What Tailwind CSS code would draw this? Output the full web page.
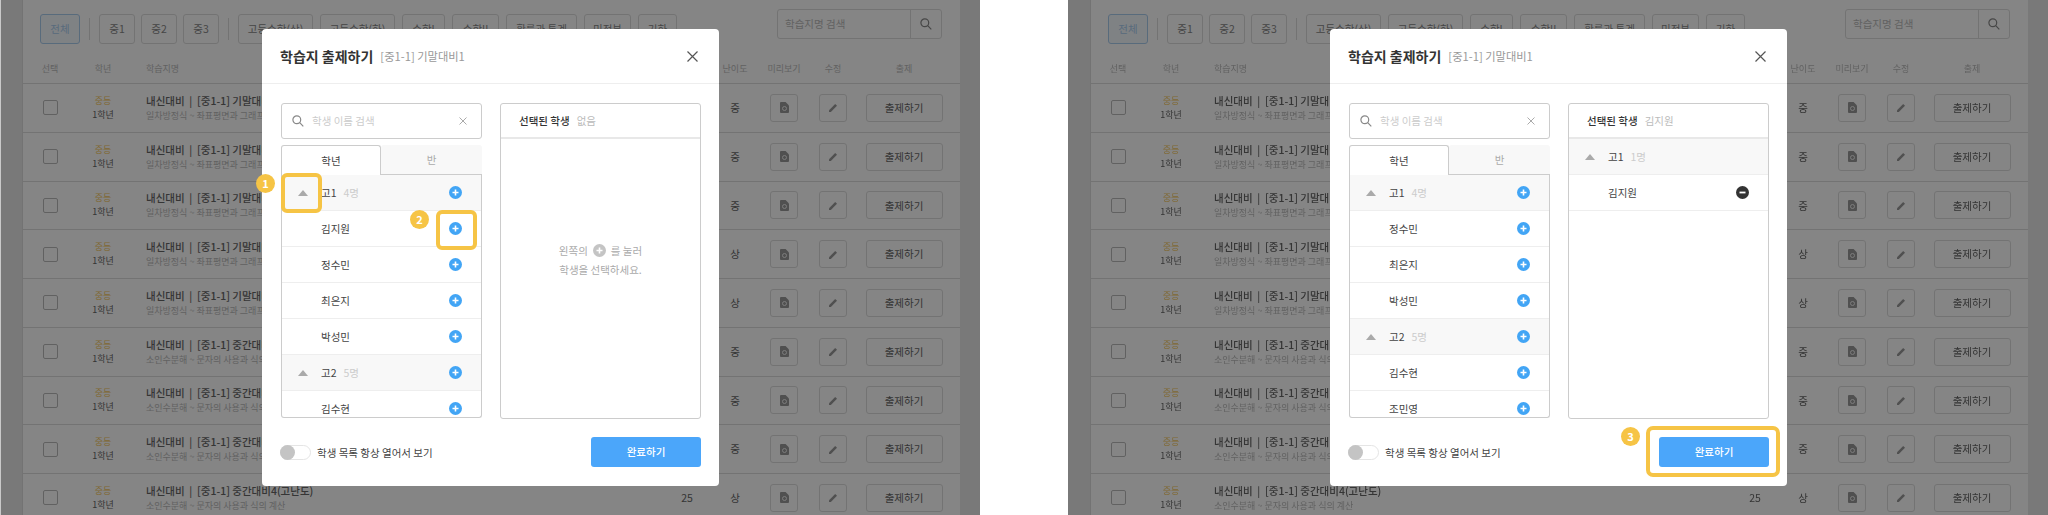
<!DOCTYPE html>
<html>
<head>
    <meta charset="UTF-8">
    <title>학습지 출제하기</title>
    <script src="https://cdn.jsdelivr.net/npm/@tailwindcss/browser@4"></script>
</head>
<body class="relative w-[2048px] h-[515px] overflow-hidden bg-white font-['Noto_Sans_CJK_KR','Noto_Sans',sans-serif] text-[10.5px] text-[#444]">
    <div class="flex gap-[88px] h-full blur-[0.4px]">
        <section class="relative w-[980px] h-full overflow-hidden">
            <div data-table class="h-full"></div>
            <div class="absolute inset-0 bg-black/48"></div>
            <div class="absolute left-[262px] top-[29px] w-[457px] h-[457px] rounded-[4px] bg-white">
                <div data-head></div>
                <div class="flex gap-[18px] pl-[19px] pr-[18px] pt-[19px]">
                    <div class="w-[201px]">
                        <div data-search></div>
                        <div data-tabs></div>
                        <div data-list="고1 4명|김지원|정수민|최은지|박성민|고2 5명|김수현" class="h-[243px] overflow-hidden rounded-b-[3px] border border-t-0 border-[#ccc]"></div>
                    </div>
                    <div class="w-[201px] h-[316px] rounded-[3px] border border-[#ccc]">
                        <div class="flex items-center h-[35px] pl-[18px] border-b-2 border-[#e8e8e8]">
                            <b class="font-medium text-[#333]">선택된 학생</b>
                            <span class="ml-[7px] text-[#bbb]">없음</span>
                        </div>
                        <div class="flex flex-col items-center pt-[102px] text-[#aaa] leading-[19px]">
                            <p class="flex items-center gap-[5px]">왼쪽의
                                <svg width="13" height="13" viewBox="0 0 13 13"><circle cx="6.5" cy="6.5" r="6.5" fill="#c4c4c4"/><path d="M6.5 3.5v6M3.5 6.5h6" stroke="#fff" stroke-width="1.6"/></svg>
                                를 눌러</p>
                            <p>학생을 선택하세요.</p>
                        </div>
                    </div>
                </div>
                <div data-foot></div>
                <div class="absolute left-[19px] top-[144px] w-[41px] h-[40px] rounded-[6px] border-4 border-[#f6c445]"></div>
                <div class="absolute left-[174px] top-[181px] w-[41px] h-[40px] rounded-[6px] border-4 border-[#f6c445]"></div>
                <div class="absolute left-[-6px] top-[145px] flex items-center justify-center w-[19px] h-[19px] rounded-full bg-[#f6c445] text-[11px] font-bold text-white">1</div>
                <div class="absolute left-[148px] top-[181px] flex items-center justify-center w-[19px] h-[19px] rounded-full bg-[#f6c445] text-[11px] font-bold text-white">2</div>
            </div>
        </section>

        <section class="relative w-[980px] h-full overflow-hidden">
            <div data-table class="h-full"></div>
            <div class="absolute inset-0 bg-black/48"></div>
            <div class="absolute left-[262px] top-[29px] w-[457px] h-[457px] rounded-[4px] bg-white">
                <div data-head></div>
                <div class="flex gap-[18px] pl-[19px] pr-[18px] pt-[19px]">
                    <div class="w-[201px]">
                        <div data-search></div>
                        <div data-tabs></div>
                        <div data-list="고1 4명|정수민|최은지|박성민|고2 5명|김수현|조민영" class="h-[243px] overflow-hidden rounded-b-[3px] border border-t-0 border-[#ccc]"></div>
                    </div>
                    <div class="w-[201px] h-[316px] rounded-[3px] border border-[#ccc]">
                        <div class="flex items-center h-[35px] pl-[18px] border-b-2 border-[#e8e8e8]">
                            <b class="font-medium text-[#333]">선택된 학생</b>
                            <span class="ml-[7px] text-[#bbb]">김지원</span>
                        </div>
                        <div class="flex items-center h-[36px] bg-[#f8f8f8] border-b border-[#eee]">
                            <span class="ml-[16px] w-0 h-0 border-x-[5px] border-b-[6px] border-x-transparent border-b-[#aaa]"></span>
                            <span class="ml-[13px] pt-px">고1</span>
                            <span class="ml-[7px] pt-px text-[#ccc]">1명</span>
                        </div>
                        <div class="flex items-center justify-between h-[36px] pl-[39px] pr-[19px] border-b border-[#eee]">
                            <span class="pt-px">김지원</span>
                            <svg width="13" height="13" viewBox="0 0 13 13"><circle cx="6.5" cy="6.5" r="6.5" fill="#333"/><path d="M3.5 6.5h6" stroke="#fff" stroke-width="1.8"/></svg>
                        </div>
                    </div>
                </div>
                <div data-foot></div>
                <div class="absolute left-[316px] top-[397px] w-[134px] h-[51px] rounded-[7px] border-4 border-[#f6c445]"></div>
                <div class="absolute left-[291px] top-[398px] flex items-center justify-center w-[19px] h-[19px] rounded-full bg-[#f6c445] text-[11px] font-bold text-white">3</div>
            </div>
        </section>
    </div>
    <div class="absolute left-0 top-0 w-px h-full bg-white/60"></div>

    <script>
        const plus = '<svg width="13" height="13" viewBox="0 0 13 13"><circle cx="6.5" cy="6.5" r="6.5" fill="#42a5f5"/><path d="M6.5 3.5v6M3.5 6.5h6" stroke="#fff" stroke-width="1.6"/></svg>';
        const magnifier = '<svg width="12" height="12" viewBox="0 0 12 12" fill="none" stroke="#888" stroke-width="1.2"><circle cx="4.8" cy="4.8" r="3.9"/><path d="M7.7 7.7l3.6 3.6"/></svg>';
        const docIcon = '<svg width="9" height="11" viewBox="0 0 9 11"><path d="M1 0h4.6L9 3.4V10a1 1 0 0 1-1 1H1a1 1 0 0 1-1-1V1a1 1 0 0 1 1-1z" fill="#999"/><circle cx="4.5" cy="6.5" r="2" fill="none" stroke="#eee" stroke-width="1"/></svg>';
        const pencilIcon = '<svg width="9" height="9" viewBox="0 0 9 9"><path d="M0 9V7.2L6.2 1 8 2.8 1.8 9z" fill="#999"/></svg>';

        const rows = [
            ['기말대비1', 0, '중'], ['기말대비2', 0, '중'], ['기말대비3', 0, '중'], ['기말대비4', 0, '상'], ['기말대비5', 0, '상'],
            ['중간대비1', 1, '중'], ['중간대비2', 1, '중'], ['중간대비3', 1, '중'], ['중간대비4(고난도)', 1, '상']
        ];
        const subs = ['일차방정식 ~ 좌표평면과 그래프', '소인수분해 ~ 문자의 사용과 식의 계산'];
        const filters = [['고등수학(상)', 'w-[75px]'], ['고등수학(하)', 'w-[75px]'], ['수학I', 'w-[43px]'], ['수학II', 'w-[47px]'], ['확률과 통계', 'w-[71px]'], ['미적분', 'w-[47px]'], ['기하', 'w-[39px]']];

        function filterBtn(label, width) {
            return `<span class="flex items-center justify-center ${width} h-[30px] rounded-[3px] border border-[#ddd]">${label}</span>`;
        }

        function tableHtml() {
            const gridCols = 'grid grid-cols-[54px_52px_534px_48px_48px_50px_48px_94px] items-center';
            const rowHtml = rows.map(r => `
                <div class="${gridCols} h-[48.75px] border-b border-[#dcdcdc] text-center">
                    <span class="justify-self-center w-[15px] h-[15px] rounded-[2px] border border-[#bbb]"></span>
                    <div class="text-[9px] leading-[14px]"><p class="text-[#f5c860]">중등</p><p class="text-[#666]">1학년</p></div>
                    <div class="pl-[17px] text-left leading-[15px]">
                        <p class="font-medium text-[#666]">내신대비 &nbsp;|&nbsp; [중1-1] ${r[0]}</p>
                        <p class="text-[9px] text-[#bbb]">${subs[r[1]]}</p>
                    </div>
                    <span class="text-[#666]">25</span>
                    <span class="text-[#666]">${r[2]}</span>
                    <span class="justify-self-center flex items-center justify-center w-[28px] h-[28px] rounded-[3px] border border-[#ddd]">${docIcon}</span>
                    <span class="justify-self-center flex items-center justify-center w-[28px] h-[28px] rounded-[3px] border border-[#ddd]">${pencilIcon}</span>
                    <span class="justify-self-center flex items-center justify-center w-[77px] h-[28px] rounded-[3px] border border-[#ddd] text-[#666]">출제하기</span>
                </div>`).join('');
            return `
                <div class="flex h-full bg-[#e8e8e8]">
                    <div class="w-[22px] shrink-0"></div>
                    <div class="w-[938px] shrink-0 bg-white border-l border-[#ddd]">
                        <div class="flex justify-between pl-[17px] pr-[18px] pt-[14px] text-[#888]">
                            <div class="flex items-center">
                                <span class="flex items-center justify-center w-[40px] h-[30px] rounded-[3px] border border-[#aacdee] bg-[#f4f9fe] text-[#a9cdee]">전체</span>
                                <span class="mx-[9px] w-px h-[22px] bg-[#ddd]"></span>
                                <div class="flex gap-[6px]">${filterBtn('중1', 'w-[36px]')}${filterBtn('중2', 'w-[36px]')}${filterBtn('중3', 'w-[36px]')}</div>
                                <span class="mx-[9px] w-px h-[22px] bg-[#ddd]"></span>
                                <div class="flex gap-[7px]">${filters.map(f => filterBtn(f[0], f[1])).join('')}</div>
                            </div>
                            <div class="flex -mt-[5px] w-[165px] h-[30px] rounded-[3px] border border-[#ddd]">
                                <span class="flex items-center flex-1 pl-[7px] text-[#bbb]">학습지명 검색</span>
                                <span class="flex items-center justify-center w-[31px] border-l border-[#ddd]">${magnifier}</span>
                            </div>
                        </div>
                        <div class="${gridCols} h-[40px] pt-[10px] border-b border-[#dcdcdc] text-[9px] text-[#bbb] text-center">
                            <span>선택</span><span>학년</span><span class="pl-[17px] text-left">학습지명</span><span></span><span>난이도</span><span>미리보기</span><span>수정</span><span>출제</span>
                        </div>
                        ${rowHtml}
                    </div>
                </div>`;
        }

        function listHtml(items) {
            return items.split('|').map(item => {
                const isGroup = item.includes(' ');
                if (!isGroup) {
                    return `<div class="flex items-center justify-between h-[36px] pl-[39px] pr-[19px] border-b border-[#eee]"><span class="pt-px">${item}</span>${plus}</div>`;
                }
                const [name, count] = item.split(' ');
                return `<div class="flex items-center justify-between h-[36px] pr-[19px] bg-[#f8f8f8] border-b border-[#eee]">
                    <div class="flex items-center"><span class="ml-[16px] w-0 h-0 border-x-[5px] border-b-[6px] border-x-transparent border-b-[#aaa]"></span><span class="ml-[13px] pt-px">${name}</span><span class="ml-[7px] pt-px text-[#ccc]">${count}</span></div>${plus}</div>`;
            }).join('');
        }

        const headHtml = `
            <div class="flex items-center justify-between h-[55px] pl-[18px] pr-[21px] border-b border-[#eee]">
                <div class="flex items-center">
                    <h1 class="text-[14px] font-bold text-[#333]">학습지 출제하기</h1>
                    <span class="ml-[7px] text-[#999] text-[11.25px]">[중1-1] 기말대비1</span>
                </div>
                <svg width="11" height="11" viewBox="0 0 11 11" stroke="#555" stroke-width="1.2"><path d="M.5.5l10 10M10.5.5l-10 10"/></svg>
            </div>`;
        const searchHtml = `
            <div class="flex items-center h-[36px] pl-[10px] pr-[14px] rounded-[3px] border border-[#ccc] text-[#ccc]">
                ${magnifier}
                <span class="ml-[8px] flex-1">학생 이름 검색</span>
                <svg width="8" height="8" viewBox="0 0 8 8" stroke="#aaa" stroke-width="1"><path d="M.5.5l7 7M7.5.5l-7 7"/></svg>
            </div>`;
        const tabsHtml = `
            <div class="flex mt-[6px] h-[30px] text-center leading-[29px]">
                <span class="w-[100px] rounded-t-[3px] border border-b-0 border-[#ccc] text-[#444]">학년</span>
                <span class="flex-1 rounded-t-[3px] bg-[#f8f8f8] border-b border-[#ccc] text-[#aaa]">반</span>
            </div>`;
        const footHtml = `
            <div class="flex items-center justify-between mt-[18px] pl-[18px] pr-[18px]">
                <div class="flex items-center gap-[6px]">
                    <span class="w-[31px] h-[15px] rounded-full border border-[#e5e5e5] bg-white"><span class="block w-[15px] h-[15px] -mt-px -ml-px rounded-full bg-[#c4c4c4]"></span></span>
                    <span class="pt-px">학생 목록 항상 열어서 보기</span>
                </div>
                <button class="w-[110px] h-[30px] rounded-[3px] bg-[#4ba6fa] font-medium text-white">완료하기</button>
            </div>`;

        document.querySelectorAll('[data-table]').forEach(el => el.innerHTML = tableHtml());
        document.querySelectorAll('[data-head]').forEach(el => el.innerHTML = headHtml);
        document.querySelectorAll('[data-search]').forEach(el => el.innerHTML = searchHtml);
        document.querySelectorAll('[data-tabs]').forEach(el => el.innerHTML = tabsHtml);
        document.querySelectorAll('[data-foot]').forEach(el => el.innerHTML = footHtml);
        document.querySelectorAll('[data-list]').forEach(el => el.innerHTML = listHtml(el.dataset.list));
    </script>
</body>
</html>
